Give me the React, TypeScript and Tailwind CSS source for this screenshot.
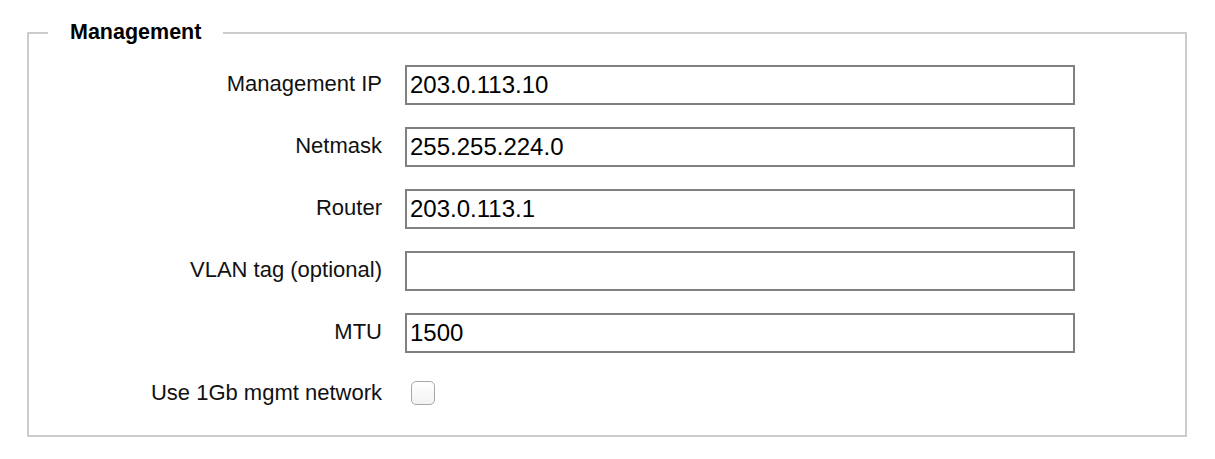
import React from "react";

const rows = [
  { label: "Management IP", value: "203.0.113.10" },
  { label: "Netmask", value: "255.255.224.0" },
  { label: "Router", value: "203.0.113.1" },
  { label: "VLAN tag (optional)", value: "" },
  { label: "MTU", value: "1500" },
];

export default function App() {
  return (
    <div className="w-[1215px] h-[459px] bg-white pt-[1px] pl-[27px]" style={{ fontFamily: '"Liberation Sans", Arial, sans-serif' }}>
      <fieldset className="w-[1160px] border-2 border-[#cccccc] pl-[19px] pb-[24px] m-0 mt-[17px]">
        <legend className="px-[22px] h-[30px] leading-[28px] text-[21.5px] font-bold text-black">Management</legend>
        <div className="-ml-[19px] pt-[17px] flex flex-col gap-[22px]">
          {rows.map((r) => (
            <div key={r.label} className="flex items-center h-[40px]">
              <div className="w-[354px] pr-[1px] text-right text-[22px] text-[#111] pb-[4px]">{r.label}</div>
              <input
                readOnly
                value={r.value}
                className="ml-[22px] w-[670px] h-[40px] border-2 border-[#808080] px-[3px] text-[24px] text-black outline-none bg-white"
                style={{ fontFamily: 'Arial, "Liberation Sans", sans-serif' }}
              />
            </div>
          ))}
          <div className="flex items-center h-[36px]">
            <div className="w-[354px] pr-[1px] text-right text-[22px] text-[#111] pb-[2px]">Use 1Gb mgmt network</div>
            <div className="ml-[28px] w-[24px] h-[24px] rounded-[5px] border border-[#a8a8a8] bg-gradient-to-b from-white to-[#f2f2f2]" />
          </div>
        </div>
      </fieldset>
    </div>
  );
}
